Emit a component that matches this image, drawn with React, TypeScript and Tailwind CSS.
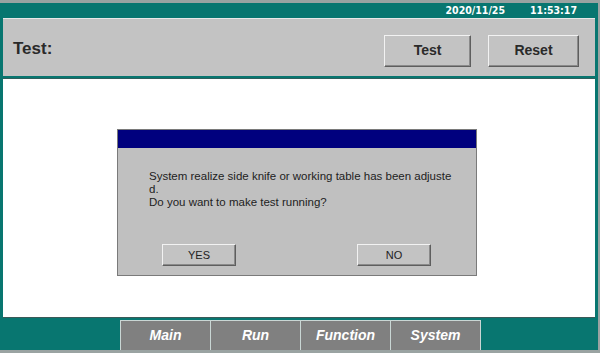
import React from 'react';

const tabs = ['Main', 'Run', 'Function', 'System'];

function Bevel({ label, className }: { label: string; className: string }) {
  return (
    <button
      className={`flex items-center justify-center bg-[#c3c3c3] border border-t-[#f2f2f2] border-l-[#f2f2f2] border-r-[#5e5e5e] border-b-[#5e5e5e] shadow-[inset_-1px_-1px_0_#8a8a8a] ${className}`}
    >
      {label}
    </button>
  );
}

export default function App() {
  return (
    <div className="w-[600px] h-[353px] bg-[#9aa3a2] pt-[3px] pr-[2px] pb-[3px] overflow-hidden font-['Liberation_Sans',Arial,sans-serif]">
      <div className="flex flex-col h-full bg-[#087670] px-[3px]">
        {/* status bar */}
        <div className="flex justify-end items-center h-[15px] gap-[25px] pr-[18px] text-white text-[10.5px] font-bold font-['DejaVu_Sans_Condensed','DejaVu_Sans',sans-serif]">
          <span>2020/11/25</span>
          <span>11:53:17</span>
        </div>

        {/* header */}
        <div className="flex items-center h-[58px] bg-[#c3c3c3] border-t border-[#e8e8e8] pl-[10px] pr-[16px]">
          <span className="text-[17px] font-bold text-[#2a2a2a] mt-[2px]">Test:</span>
          <div className="flex gap-[17px] ml-auto mt-[6px]">
            <Bevel label="Test" className="w-[87px] h-[32px] text-[14px] font-bold text-[#2a2a2a]" />
            <Bevel label="Reset" className="w-[91px] h-[32px] text-[14px] font-bold text-[#2a2a2a]" />
          </div>
        </div>

        {/* content */}
        <div className="flex-1 bg-white mt-[2px] border-t border-[#2f5f5c] pt-[50px] pl-[114px]">
          <div className="w-[360px] h-[147px] bg-[#c0c0c0] border border-[#7a7a7a] flex flex-col">
            <div className="h-[18px] bg-[#00007e]" />
            <div className="pl-[31px] pt-[22px] text-[11.5px] leading-[13px] text-[#222]">
              <p>System realize side knife or working table has been adjuste</p>
              <p>d.</p>
              <p>Do you want to make test running?</p>
            </div>
            <div className="flex gap-[121px] pl-[44px] mt-[35px]">
              <Bevel label="YES" className="w-[74px] h-[22px] text-[11px] text-[#222]" />
              <Bevel label="NO" className="w-[74px] h-[22px] text-[11px] text-[#222]" />
            </div>
          </div>
        </div>

        {/* tabs */}
        <div className="flex h-[33px] border-t border-[#3b5a58] pt-[2px] pl-[117px]">
          {tabs.map((t) => (
            <div
              key={t}
              className="w-[90px] flex items-center justify-center bg-[#808080] border-l border-t border-[#c9d6d4] text-white italic font-bold text-[14px]"
            >
              {t}
            </div>
          ))}
          <div className="w-0 border-l border-[#c9d6d4]" />
        </div>
      </div>
    </div>
  );
}
